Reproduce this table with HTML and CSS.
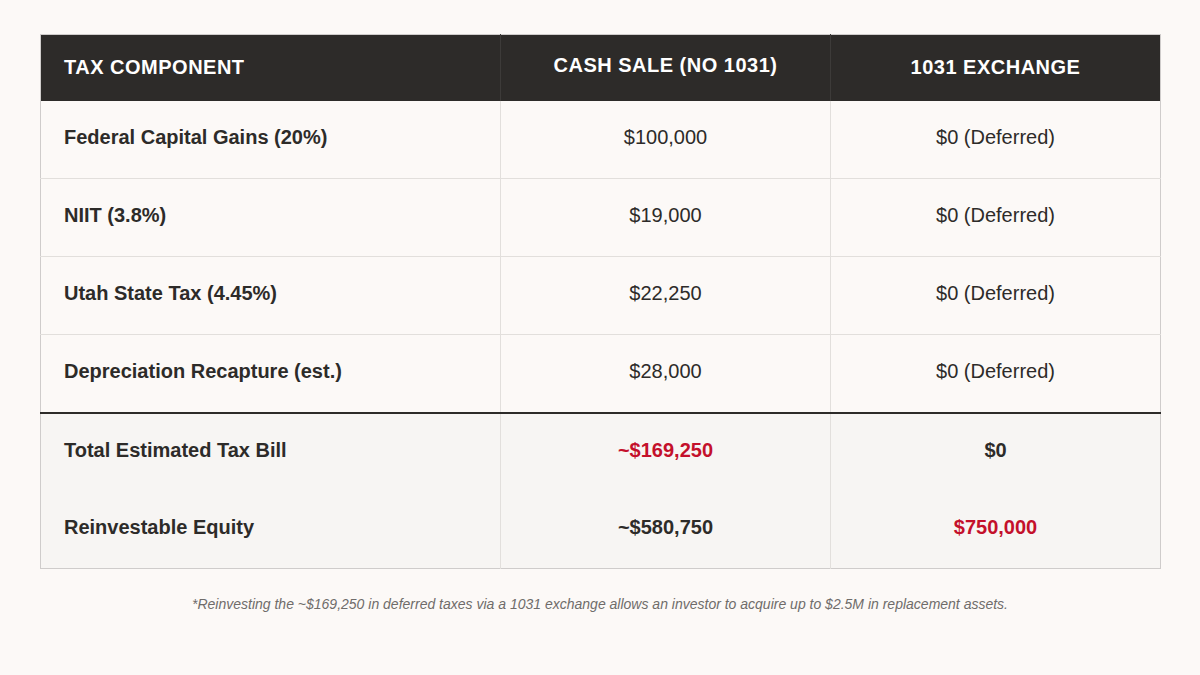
FILE: index.html
```html
<!DOCTYPE html>
<html lang="en">
<head>
<meta charset="utf-8">
<title>1031 Exchange Tax Comparison</title>
<link rel="stylesheet" href="styles.css">
</head>
<body>
<main class="page">
  <table class="tax-table">
    <colgroup>
      <col class="col-label">
      <col class="col-value">
      <col class="col-value">
    </colgroup>
    <thead>
      <tr>
        <th class="th-left">Tax Component</th>
        <th class="th-center"><span class="th-raised">Cash Sale (No 1031)</span></th>
        <th class="th-center">1031 Exchange</th>
      </tr>
    </thead>
    <tbody>
      <tr>
        <td class="label">Federal Capital Gains (20%)</td>
        <td class="value">$100,000</td>
        <td class="value">$0 (Deferred)</td>
      </tr>
      <tr>
        <td class="label">NIIT (3.8%)</td>
        <td class="value">$19,000</td>
        <td class="value">$0 (Deferred)</td>
      </tr>
      <tr>
        <td class="label">Utah State Tax (4.45%)</td>
        <td class="value">$22,250</td>
        <td class="value">$0 (Deferred)</td>
      </tr>
      <tr>
        <td class="label">Depreciation Recapture (est.)</td>
        <td class="value">$28,000</td>
        <td class="value">$0 (Deferred)</td>
      </tr>
      <tr class="total first-total">
        <td class="label">Total Estimated Tax Bill</td>
        <td class="value strong red">~$169,250</td>
        <td class="value strong">$0</td>
      </tr>
      <tr class="total">
        <td class="label">Reinvestable Equity</td>
        <td class="value strong">~$580,750</td>
        <td class="value strong red">$750,000</td>
      </tr>
    </tbody>
  </table>
  <p class="footnote">*Reinvesting the ~$169,250 in deferred taxes via a 1031 exchange allows an investor to acquire up to $2.5M in replacement assets.</p>
</main>
</body>
</html>
```

FILE: styles.css
```css
html, body {
  margin: 0;
  padding: 0;
  background: #fcf9f7;
}

body {
  font-family: "Liberation Sans", Arial, sans-serif;
  color: #2d2b29;
}

.page {
  padding: 34px 40px 0 40px;
}

.tax-table {
  width: 1120px;
  border-collapse: collapse;
  table-layout: fixed;
  border: 1px solid #cfcccb;
}

.col-label {
  width: 460px;
}

.col-value {
  width: 330px;
}

.tax-table th {
  background: #2d2b29;
  color: #ffffff;
  font-size: 20px;
  font-weight: 700;
  text-transform: uppercase;
  letter-spacing: 0.5px;
  height: 64px;
  padding: 0 23px 2px 23px;
  border-right: 1px solid #3d3b39;
  vertical-align: middle;
}

.tax-table th:last-child {
  border-right: none;
}

.th-left {
  text-align: left;
}

.th-center {
  text-align: center;
}

.th-raised {
  position: relative;
  top: -2px;
}

.tax-table td {
  height: 73px;
  padding: 0 23px 4px 23px;
  font-size: 20px;
  border-bottom: 1px solid #e2dfdc;
  border-right: 1px solid #e2dfdc;
  vertical-align: middle;
}

.tax-table td:last-child {
  border-right: none;
}

.label {
  font-weight: 700;
  text-align: left;
}

.value {
  text-align: center;
}

.strong {
  font-weight: 700;
}

.red {
  color: #c4102b;
}

.tax-table .total td {
  background: #f7f5f3;
  border-bottom: none;
  height: 73px;
}

.first-total td {
  border-top: 2px solid #2d2b29;
}

.footnote {
  margin: 27px 0 0 0;
  text-align: center;
  font-size: 14px;
  font-style: italic;
  color: #6f6c6a;
}
```
